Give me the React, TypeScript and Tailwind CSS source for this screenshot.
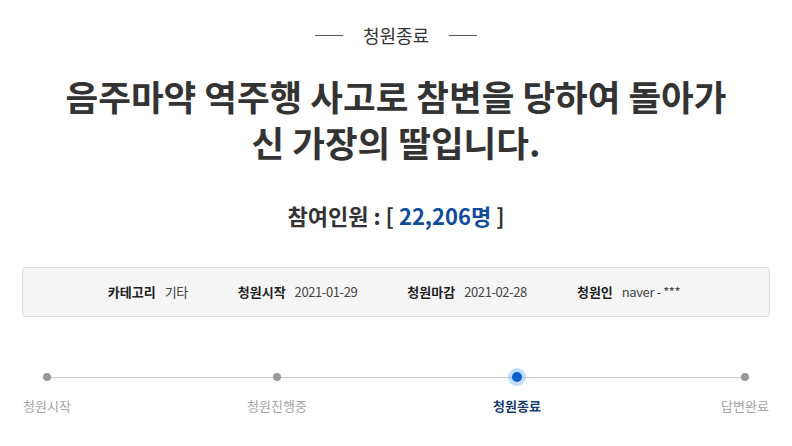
import React from "react";

const font = { fontFamily: '"Noto Sans CJK KR", "Noto Sans", sans-serif' };

const infoItems = [
  { label: "카테고리", value: "기타" },
  { label: "청원시작", value: "2021-01-29" },
  { label: "청원마감", value: "2021-02-28" },
  { label: "청원인", value: "naver - ***" },
];

// spacing between step columns (each column is 60px wide)
const steps = [
  { name: "청원시작", active: false, cls: "" },
  { name: "청원진행중", active: false, cls: "ml-[170px]" },
  { name: "청원종료", active: true, cls: "ml-[180px]" },
  { name: "답변완료", active: false, cls: "ml-[168px]" },
];

const App = () => {
  return (
    <div className="w-[792px] h-[446px] bg-white overflow-hidden text-[#333]" style={font}>
      {/* status header */}
      <div className="pt-[23px] flex items-center justify-center gap-[20px]">
        <span className="w-[28px] h-px bg-[#555]" />
        <span className="text-[18px] leading-[24px] text-[#333]">청원종료</span>
        <span className="w-[28px] h-px bg-[#555]" />
      </div>

      {/* title */}
      <h1 className="mt-[26px] text-center text-[35.5px] leading-[46px] font-bold text-[#333]">
        음주마약 역주행 사고로 참변을 당하여 돌아가
        <br />신 가장의 딸입니다.
      </h1>

      {/* participants */}
      <div className="mt-[35px] text-center text-[22px] leading-[30px] font-bold text-[#333]">
        참여인원 : [ <span className="text-[#0f4c9c]">22,206명</span> ]
      </div>

      {/* info box */}
      <div className="mt-[37px] mx-[22px] h-[50px] bg-[#f5f5f5] border border-[#dcdcdc] rounded-[3px] flex items-center justify-center gap-[50px] pr-[4px]">
        {infoItems.map((item) => (
          <div key={item.label} className="flex items-center gap-[9px] text-[13px]">
            <span className="font-bold text-[#222]">{item.label}</span>
            <span className="text-[#444] tracking-[-0.4px]">{item.value}</span>
          </div>
        ))}
      </div>

      {/* progress */}
      <div className="relative mt-[51px] pl-[17px] flex">
        <div className="absolute left-[47px] w-[698px] top-[9px] h-px bg-[#c8c8c8]" />
        {steps.map((step) => (
          <div key={step.name} className={`relative w-[60px] flex flex-col items-center ${step.cls}`}>
            <div className="h-[18px] flex items-center justify-center">
              {step.active ? (
                <span className="w-[10px] h-[10px] rounded-full bg-[#0a5fc9] shadow-[0_0_0_4px_rgba(120,180,250,0.45)]" />
              ) : (
                <span className="w-[8px] h-[8px] rounded-full bg-[#999]" />
              )}
            </div>
            <span
              className={
                step.active
                  ? "mt-[10px] text-[13px] leading-[20px] font-bold text-[#163a70] whitespace-nowrap"
                  : "mt-[10px] text-[13px] leading-[20px] text-[#a5a5a5] whitespace-nowrap"
              }
            >
              {step.name}
            </span>
          </div>
        ))}
      </div>
    </div>
  );
};

export default App;
